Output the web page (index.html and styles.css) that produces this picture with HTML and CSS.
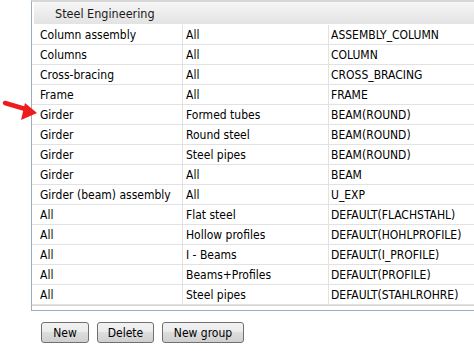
FILE: index.html
```html
<!DOCTYPE html>
<html>
<head>
<meta charset="utf-8">
<link rel="stylesheet" href="styles.css">
</head>
<body>
<div class="page">
  <div class="panel">
    <div class="group-header">Steel Engineering</div>
    <div class="grid">
      <div class="c1">Column assembly</div><div class="c2">All</div><div class="c3">ASSEMBLY_COLUMN</div>
      <div class="c1">Columns</div><div class="c2">All</div><div class="c3">COLUMN</div>
      <div class="c1">Cross-bracing</div><div class="c2">All</div><div class="c3">CROSS_BRACING</div>
      <div class="c1">Frame</div><div class="c2">All</div><div class="c3">FRAME</div>
      <div class="c1">Girder</div><div class="c2">Formed tubes</div><div class="c3">BEAM(ROUND)</div>
      <div class="c1">Girder</div><div class="c2">Round steel</div><div class="c3">BEAM(ROUND)</div>
      <div class="c1">Girder</div><div class="c2">Steel pipes</div><div class="c3">BEAM(ROUND)</div>
      <div class="c1">Girder</div><div class="c2">All</div><div class="c3">BEAM</div>
      <div class="c1">Girder (beam) assembly</div><div class="c2">All</div><div class="c3">U_EXP</div>
      <div class="c1">All</div><div class="c2">Flat steel</div><div class="c3">DEFAULT(FLACHSTAHL)</div>
      <div class="c1">All</div><div class="c2">Hollow profiles</div><div class="c3">DEFAULT(HOHLPROFILE)</div>
      <div class="c1">All</div><div class="c2">I - Beams</div><div class="c3">DEFAULT(I_PROFILE)</div>
      <div class="c1">All</div><div class="c2">Beams+Profiles</div><div class="c3">DEFAULT(PROFILE)</div>
      <div class="c1">All</div><div class="c2">Steel pipes</div><div class="c3">DEFAULT(STAHLROHRE)</div>
    </div>
    <div class="grid-end"></div>
  </div>
  <div class="buttons">
    <button class="btn btn-new">New</button>
    <button class="btn btn-delete">Delete</button>
    <button class="btn btn-group">New group</button>
  </div>
  <svg class="arrow" width="40" height="26" viewBox="0 0 40 26">
    <line x1="5" y1="5" x2="27" y2="11.5" stroke="#ee1c1c" stroke-width="4.5" stroke-linecap="round"/>
    <polygon points="37,15 25,5 21,22" fill="#ee1c1c"/>
  </svg>
</div>
</body>
</html>
```
FILE: styles.css
```css
html, body {
  margin: 0;
  padding: 0;
  background: #ffffff;
}
body {
  width: 474px;
  height: 351px;
  overflow: hidden;
  font-family: "DejaVu Sans Condensed", "DejaVu Sans", sans-serif;
  font-size: 12px;
  color: #000;
}
.page {
  position: relative;
  padding-left: 31px;
}
.panel {
  border-left: 1px solid #9eacc0;
  border-bottom: 1px solid #9eacc0;
  border-top: 2px solid #d7d7d7;
  width: 442px;
  padding-bottom: 4px;
}
.group-header {
  height: 22px;
  line-height: 23px;
  padding-left: 21px;
  margin-left: 2px;
  background: linear-gradient(#f7f7f7, #ececec 50%, #e3e3e3);
  border-bottom: 1px solid #ffffff;
  color: #1a1a1a;
  font-family: "DejaVu Sans Condensed", "DejaVu Sans", sans-serif;
  font-size: 12.5px;
}
.grid {
  display: grid;
  grid-template-columns: 151px 146px 1fr;
  grid-auto-rows: 20px;
}
.grid > div {
  border-bottom: 1px solid #e2e2e2;
  line-height: 21px;
  white-space: nowrap;
  overflow: hidden;
}
.c1 {
  padding-left: 8px;
  border-right: 1px solid #e2e2e2;
}
.c2 {
  padding-left: 3px;
  border-right: 1px solid #e2e2e2;
}
.c3 {
  padding-left: 2px;
}
.grid-end {
  height: 1px;
  background: #d6d6d6;
}
.buttons {
  display: flex;
  gap: 8px;
  margin-left: 10px;
  margin-top: 11px;
}
.btn {
  height: 21px;
  padding: 0;
  border: 1px solid #707070;
  border-radius: 3px;
  background: linear-gradient(#f2f2f2, #ebebeb 45%, #dddddd 50%, #cfcfcf);
  font-family: "DejaVu Sans Condensed", "DejaVu Sans", sans-serif;
  font-size: 12px;
  color: #000;
}
.btn-new { width: 48px; }
.btn-delete { width: 57px; }
.btn-group { width: 82px; }
.arrow {
  position: absolute;
  left: 0;
  top: 98px;
}
```
